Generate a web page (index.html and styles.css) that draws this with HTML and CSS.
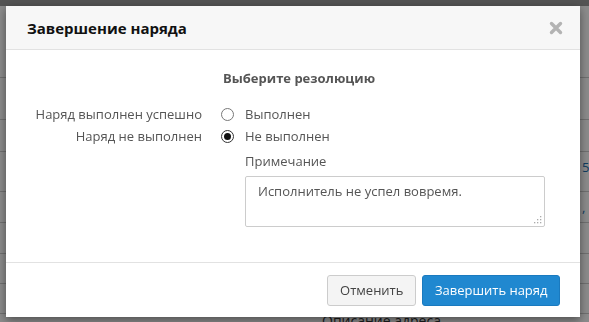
FILE: index.html
```html
<!DOCTYPE html>
<html>
  <head>
    <title>Завершение наряда</title>
    <meta charset="utf-8"/>
    <link rel="stylesheet" href="styles.css">
  </head>
  <body>
    <div class="page">
      <div class="topbar"></div>
      <div class="rows">
        <div class="row" style="height:71px"></div>
        <div class="row" style="height:41px"></div>
        <div class="row" style="height:31px"></div>
        <div class="row" style="height:39px"><span class="link">5</span></div>
        <div class="row" style="height:30px"><span class="link">, Р</span></div>
        <div class="row" style="height:30px"></div>
        <div class="row" style="height:29px"></div>
        <div class="row" style="height:29px"></div>
        <div class="row addr-row"><span class="addr">Описание адреса</span></div>
      </div>
    </div>
    <div class="backdrop"></div>

    <div class="modal">
      <div class="modal-header">
        <h4>Завершение наряда</h4>
        <svg class="close" width="14" height="14" viewBox="0 0 14 14">
          <path d="M2.5 2.5 L11.5 11.5 M11.5 2.5 L2.5 11.5" stroke="#b3b3b3" stroke-width="3.4" stroke-linecap="round"/>
        </svg>
      </div>
      <div class="modal-body">
        <div class="form">
          <div></div>
          <div class="heading">Выберите резолюцию</div>

          <div class="label">Наряд выполнен успешно</div>
          <label class="radio"><span class="dot"></span>Выполнен</label>

          <div class="label">Наряд не выполнен</div>
          <label class="radio"><span class="dot checked"></span>Не выполнен</label>

          <div></div>
          <div class="note">
            <div class="note-title">Примечание</div>
            <div class="textarea">Исполнитель не успел вовремя.
              <svg class="grip" width="8" height="8" viewBox="0 0 8 8">
                <rect x="6" y="0" width="1.3" height="1.3" fill="#aaa"/>
                <rect x="3" y="3" width="1.3" height="1.3" fill="#aaa"/>
                <rect x="6" y="3" width="1.3" height="1.3" fill="#aaa"/>
                <rect x="0" y="6" width="1.3" height="1.3" fill="#aaa"/>
                <rect x="3" y="6" width="1.3" height="1.3" fill="#aaa"/>
                <rect x="6" y="6" width="1.3" height="1.3" fill="#aaa"/>
              </svg>
            </div>
          </div>
        </div>
      </div>
      <div class="modal-footer">
        <button class="btn">Отменить</button>
        <button class="btn primary">Завершить наряд</button>
      </div>
    </div>
  </body>
</html>
```

FILE: styles.css
```css
html, body {height: 100%;}
body {
  margin: 0;
  font-family: "Open Sans", "Noto Sans", sans-serif;
  font-size: 13px;
  color: #555;
  background: #fff;
  overflow: hidden;
}

/* page under the dialog */
.page {
  height: 100%;
  overflow: hidden;
}
.topbar {
  height: 6px;
  background: #9a9a9a;
}
.rows {
  display: flex;
  flex-direction: column;
}
.row {
  border-bottom: 1px solid #ccc;
  position: relative;
  flex: none;
}
.addr-row {
  height: 8px;
  border-bottom: none;
}
.link {
  position: absolute;
  left: 582px;
  top: 6px;
  color: #1e6fb0;
  white-space: nowrap;
}
.addr {
  position: absolute;
  left: 322px;
  top: -3px;
  font-size: 14px;
  color: #333;
  white-space: nowrap;
}

.backdrop {
  position: fixed;
  inset: 0;
  background: rgba(0,0,0,0.45);
}

/* dialog */
.modal {
  position: absolute;
  left: 6px;
  top: 6px;
  width: 574px;
  height: 311px;
  background: #fff;
  box-shadow: 0 3px 9px rgba(0,0,0,0.45);
  display: flex;
  flex-direction: column;
}

.modal-header {
  height: 43px;
  background: #f7f7f7;
  border-bottom: 1px solid #e2e2e2;
  display: flex;
  align-items: center;
  justify-content: space-between;
  padding: 0 17px 0 21px;
}
.modal-header h4 {
  margin: 0;
  font-size: 15px;
  font-weight: 700;
  color: #111;
}
.close {
  margin-top: 1px;
}

.modal-body {
  flex: 1;
  padding: 19px 15px 0;
}
.form {
  display: grid;
  grid-template-columns: 181px 1fr;
  column-gap: 19px;
  align-items: center;
}
.heading {
  font-weight: 700;
  margin: 0 0 16px 2px;
  line-height: 18px;
}
.label {
  text-align: right;
  line-height: 22px;
}
.radio {
  display: flex;
  align-items: center;
  line-height: 22px;
}
.dot {
  width: 11px;
  height: 11px;
  border: 1px solid #777;
  border-radius: 50%;
  margin-right: 11px;
  position: relative;
  background: #fff;
}
.dot.checked {
  border-color: #333;
}
.dot.checked::after {
  content: "";
  position: absolute;
  left: 2px;
  top: 2px;
  width: 7px;
  height: 7px;
  border-radius: 50%;
  background: #111;
}

.note {
  padding-left: 24px;
  padding-top: 3px;
}
.note-title {
  line-height: 22px;
  margin-bottom: 4px;
}
.textarea {
  width: 274px;
  height: 38px;
  border: 1px solid #ccc;
  border-radius: 2px;
  padding: 5px 12px 6px;
  line-height: 18px;
  position: relative;
}
.grip {
  position: absolute;
  right: 2px;
  bottom: 2px;
}

.modal-footer {
  height: 54px;
  border-top: 1px solid #e2e2e2;
  display: flex;
  align-items: center;
  justify-content: flex-end;
  gap: 6px;
  padding: 0 20px 0 0;
}
.btn {
  font-family: inherit;
  font-size: 13px;
  height: 31px;
  padding: 0 12px;
  border-radius: 3px;
  border: 1px solid #ccc;
  background: #f4f4f4;
  color: #444;
}
.btn.primary {
  background: #2088d0;
  border-color: #1a7abf;
  color: #fff;
  padding: 0 11.5px;
}
```
